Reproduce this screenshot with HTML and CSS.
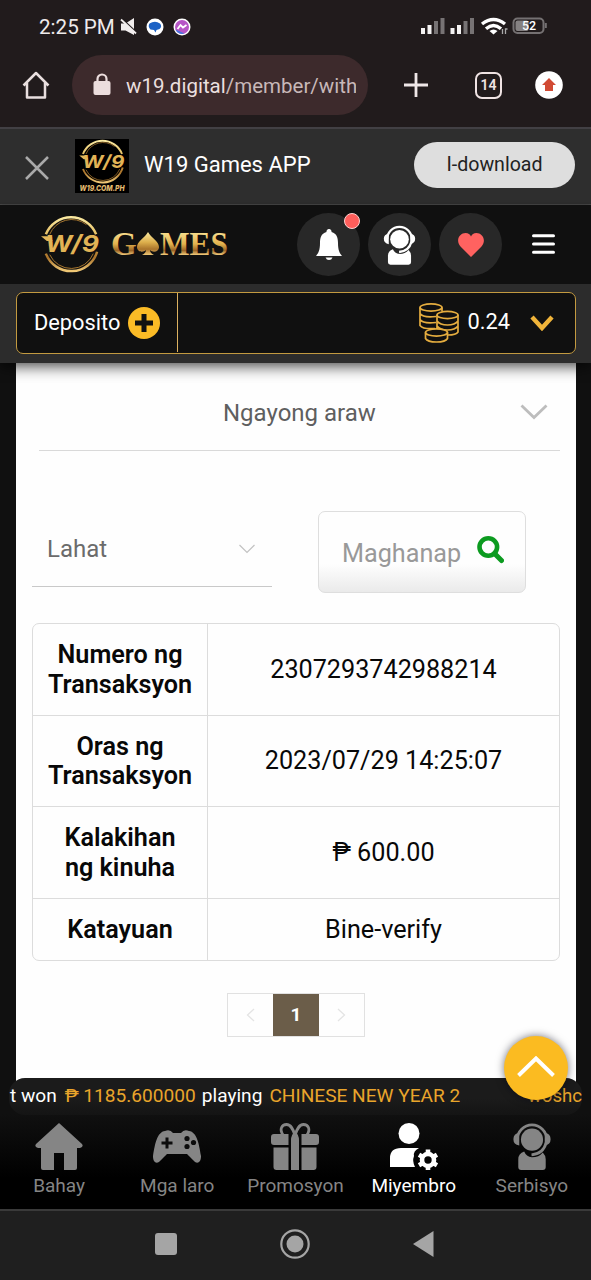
FILE: index.html
```html
<!DOCTYPE html>
<html lang="fil">
<head>
<meta charset="utf-8">
<title>W19 Games</title>
<link rel="stylesheet" href="styles.css">
</head>
<body>
<svg class="defs" width="0" height="0" aria-hidden="true">
  <defs>
    <linearGradient id="gold" x1="0" y1="0" x2="0" y2="1">
      <stop offset="0" stop-color="#fbe9a0"/><stop offset=".45" stop-color="#dcae4b"/><stop offset=".75" stop-color="#a9732b"/><stop offset="1" stop-color="#f0c876"/>
    </linearGradient>
    <linearGradient id="goldtext" x1="0" y1="0" x2="0" y2="1">
      <stop offset=".2" stop-color="#f6dc8a"/><stop offset=".5" stop-color="#e2b24d"/><stop offset=".68" stop-color="#9b6526"/><stop offset=".8" stop-color="#efc878"/>
    </linearGradient>
    <symbol id="emblem" viewBox="0 0 62 60">
      <path d="M5 20A28 28 0 0 1 57 20M5 40A28 28 0 0 0 58 38" fill="none" stroke="url(#gold)" stroke-width="2.6"/>
      <path d="M9 20A24.500 24.500 0 0 1 47 10M9 41A24.500 24.500 0 0 0 54 40" fill="none" stroke="#a9772f" stroke-width="1"/>
      <path d="M0 22h9l3 5H6z" fill="#e2b85c"/>
      <text x="4" y="38.500" textLength="56" lengthAdjust="spacingAndGlyphs" class="emblem-text" fill="#e2b456">W/9</text>
    </symbol>
    <symbol id="agent" viewBox="0 0 40 48">
      <path d="M5 17a15 15 0 0 1 30 0" fill="none" stroke="currentColor" stroke-width="2.800"/>
      <path d="M7 10v13q-6-1-6-6.500T7 10zM33 10v13q6-1 6-6.500T33 10z" fill="currentColor"/>
      <circle cx="20" cy="17" r="11.300" fill="currentColor"/>
      <path d="M12 29q-6 2-6 8v8q0 3 3 3h22q3 0 3-3v-8q0-4-3-7-4 5-11 5-6-1-8-6z" fill="currentColor"/>
      <path d="M34.500 20q-3 11.500-15 12.500" fill="none" stroke="currentColor" stroke-width="2.800"/>
    </symbol>
  </defs>
</svg>

<header class="status">
  <span class="clock">2:25 PM</span>
  <svg class="mute" width="18" height="18" viewBox="0 0 18 18"><path d="M1 5.500h4.500L14 0v17l-8.500-4.500H1z" fill="#f2eeee"/><path d="M1 0l17 16" stroke="#211b1c" stroke-width="1.800"/><path d="M1 1.500l15 14" stroke="#f2eeee" stroke-width="1.800"/></svg>
  <svg class="chat" width="18" height="18" viewBox="0 0 18 18"><circle cx="9" cy="9" r="8.500" fill="#fff"/><path d="M3.500 5.500Q9 2 14 5.500q2.500 3-.5 5.500l-3 1-1 2.500-1.500-2.500-3.500-.5q-3-3-1-6z" fill="#1c62c5"/></svg>
  <svg class="messenger" width="18" height="18" viewBox="0 0 18 18"><circle cx="9" cy="9" r="8.500" fill="#fff"/><circle cx="9" cy="9" r="7" fill="#b655c6"/><path d="M2.500 11.500a7 7 0 0 0 9 4z" fill="#4375df"/><path d="M4.500 11l3-4 2.500 2.500L13.500 7" fill="none" stroke="#fff" stroke-width="1.800"/></svg>
  <svg class="signals" width="126" height="20" viewBox="0 0 126 20">
    <g fill="#f4f2f2"><rect y="11" width="4" height="6"/><rect x="6.500" y="8" width="4" height="9"/><rect x="29.500" y="11" width="4" height="6"/><rect x="36" y="8" width="4" height="9"/></g>
    <g fill="#777374"><rect x="13" y="4" width="4" height="13"/><rect x="19.500" y="1" width="4" height="16"/><rect x="42.500" y="4" width="4" height="13"/><rect x="49" y="1" width="4" height="16"/></g>
    <path d="M61 7q11.500-9 23 0M65 11.800q7.500-6.500 15 0" fill="none" stroke="#fff" stroke-width="3.400"/><path d="M68.500 14q4-3 8 0l-4 3.500z" fill="#fff"/>
    <path d="M81.500 12v5M84.500 17v-5h2" fill="none" stroke="#aaa" stroke-width="1.300"/>
    <rect x="92.500" y="1.500" width="30" height="14.500" rx="4" fill="none" stroke="#757172" stroke-width="2"/><rect x="94.500" y="3.500" width="13" height="10.500" rx="2" fill="#858182"/><path d="M124.800 6v5" stroke="#757172" stroke-width="2"/>
    <text x="101" y="13" class="battery">52</text>
  </svg>
</header>

<nav class="browser">
  <svg class="home" width="28" height="29" viewBox="0 0 28 29"><path d="M1.500 14.500L14 2l12.500 12.500M5 12v14.500h18V12" fill="none" stroke="#e9dfdf" stroke-width="2.500" stroke-linejoin="round"/></svg>
  <div class="address">
    <svg width="18" height="23" viewBox="0 0 18 23"><rect x=".5" y="8" width="17" height="14" rx="2" fill="#ecdddd"/><path d="M4.500 9V6a4.500 4.500 0 0 1 9 0v3" fill="none" stroke="#ecdddd" stroke-width="2.200"/></svg>
    <span class="url">w19.digital<span class="path">/member/with</span></span>
  </div>
  <svg class="plus" width="24" height="24" viewBox="0 0 24 24"><path d="M12 0v24M0 12h24" stroke="#efe7e7" stroke-width="2.800"/></svg>
  <span class="tabs">14</span>
  <svg class="update" width="28" height="28" viewBox="0 0 28 28"><circle cx="14" cy="14" r="13.800" fill="#fff"/><path d="M14 7l7 7h-3v6h-8v-6H7z" fill="#d14a33"/></svg>
</nav>

<section class="banner">
  <svg class="close" width="24" height="24" viewBox="0 0 24 24"><path d="M1 1l22 22M23 1L1 23" stroke="#aaa" stroke-width="2.500"/></svg>
  <svg class="applogo" width="54" height="54" viewBox="0 0 54 54"><rect width="54" height="54" fill="#000"/><use href="#emblem" x="4" y="0" width="47" height="45"/><text x="27" y="52" text-anchor="middle" textLength="45" lengthAdjust="spacingAndGlyphs" class="domain">W19.COM.PH</text></svg>
  <span class="appname">W19 Games APP</span>
  <button class="download">I-download</button>
</section>

<section class="site">
  <svg class="logo" width="190" height="62" viewBox="0 0 190 62">
    <use href="#emblem" x="0" y="1" width="60" height="58"/>
    <g class="games" fill="url(#goldtext)"><text x="70" y="41">G</text><text x="119" y="41" textLength="68" lengthAdjust="spacingAndGlyphs">MES</text></g>
    <path d="M107 18c3 6 11 9 11 15 0 5-6 6-9 3q0 3 4 5h-12q4-2 4-5c-3 3-9 2-9-3 0-6 8-9 11-15z" fill="url(#gold)"/>
  </svg>
  <div class="round bell"><svg width="26" height="31" viewBox="0 0 26 31"><path d="M13 0a2.500 2.500 0 0 1 2.500 3C21 4.500 22 9 22 14c0 7 1.500 10 4 13H0c2.500-3 4-6 4-13 0-5 1-9.500 6.500-11A2.500 2.500 0 0 1 13 0z" fill="#fff"/><path d="M9.500 28.500h7q-1 2.500-3.500 2.500t-3.500-2.500z" fill="#fff"/></svg><i class="dot"></i></div>
  <div class="round"><svg width="33" height="40"><use href="#agent" width="33" height="40"/></svg></div>
  <div class="round"><svg width="26" height="24" viewBox="0 0 26 24"><path d="M13 24L2.500 13.500C-3 7 2 0 7.500 0 10.500 0 12 1.500 13 3.500 14 1.500 15.500 0 18.500 0 24 0 29 7 23.500 13.500z" fill="#ff6260"/></svg></div>
  <svg class="menu" width="23" height="20" viewBox="0 0 23 20"><path d="M1.500 1.700h20M1.500 10h20M1.500 18.300h20" stroke="#fff" stroke-width="3" stroke-linecap="round"/></svg>
</section>

<section class="wallet">
  <div class="walletbox">
    <div class="deposit"><span>Deposito</span><svg width="32" height="32" viewBox="0 0 32 32"><circle cx="16" cy="16" r="16" fill="#fbbb26"/><path d="M16 7v18M7 16h18" stroke="#111" stroke-width="5"/></svg></div>
    <div class="balance">
      <svg width="40" height="40" viewBox="0 0 40 40" fill="none" stroke="#e5ad3f" stroke-width="1.700">
        <ellipse cx="12" cy="4.500" rx="11" ry="3.600"/><path d="M1 4.500v18q3 4 15 3M23 4.500v4M1 10.500q3 4.500 16 3M1 16.500q3 4.500 16 3"/>
        <ellipse cx="28.500" cy="12" rx="10.500" ry="3.600"/><path d="M18 12v14M39 12v17q-2 3-10 3M18 18q3 4 10.500 4T39 18M18 23q3 4 10.500 4T39 23"/>
        <ellipse cx="17.500" cy="29.500" rx="11" ry="3.600" fill="#101010"/><path d="M6.500 29.500v6q2 3.500 11 3.500t11-3.500v-6"/>
      </svg>
      <span class="amount">0.24</span>
      <svg class="caret" width="24" height="16" viewBox="0 0 24 16"><path d="M2 2l10 11L22 2" fill="none" stroke="#f0b43a" stroke-width="4.400"/></svg>
    </div>
  </div>
</section>

<main class="page">
  <div class="sheet">
    <div class="range"><span>Ngayong araw</span><svg width="28" height="16" viewBox="0 0 28 16"><path d="M1.500 1.500L14 13.500l12.500-12" fill="none" stroke="#bdbdbd" stroke-width="2.800"/></svg></div>
    <div class="filters">
      <div class="select"><span>Lahat</span><svg width="16" height="10" viewBox="0 0 16 10"><path d="M.5 1L8 8.500 15.500 1" fill="none" stroke="#c2c2c2" stroke-width="1.200"/></svg></div>
      <button class="search"><span>Maghanap</span><svg width="27" height="29" viewBox="0 0 27 29"><circle cx="11.300" cy="12" r="8.800" fill="none" stroke="#0c9b20" stroke-width="4.600"/><path d="M17.500 18.500l7 7" stroke="#0c9b20" stroke-width="5" stroke-linecap="round"/></svg></button>
    </div>
    <div class="record">
      <div class="row"><b>Numero ng<br>Transaksyon</b><span>2307293742988214</span></div>
      <div class="row"><b>Oras ng<br>Transaksyon</b><span>2023/07/29 14:25:07</span></div>
      <div class="row"><b>Kalakihan<br>ng kinuha</b><span>₱ 600.00</span></div>
      <div class="row short"><b>Katayuan</b><span>Bine-verify</span></div>
    </div>
    <div class="pager">
      <i><svg width="9" height="14" viewBox="0 0 9 14"><path d="M8 1L1.500 7 8 13" fill="none" stroke="#e4e4e4" stroke-width="1.300"/></svg></i><b>1</b><i><svg width="9" height="14" viewBox="0 0 9 14"><path d="M1 1l6.500 6L1 13" fill="none" stroke="#e4e4e4" stroke-width="1.300"/></svg></i>
    </div>
  </div>
</main>

<footer class="bottom">
  <div class="ticker"><span class="winner">t won</span><em class="prize">₱ 1185.600000</em><span class="verb">playing</span><em class="title">CHINESE NEW YEAR 2</em><em class="next">woshc</em></div>
  <div class="tabsbar">
    <a><svg width="48" height="47" viewBox="0 0 48 47"><path d="M24 0l23 21q2 3-2 4h-3v20q0 2-2 2H29V30H19v17H8q-2 0-2-2V25H3q-4-1-2-4z" fill="currentColor"/></svg><span>Bahay</span></a>
    <a><svg width="48" height="47" viewBox="0 0 48 47"><path d="M12 8q5-2 8 2h8q3-4 8-2c8 1 10 13 12 25 0 8-5 8-8 4l-6-6H14l-6 6c-3 4-8 4-8-4C2 21 4 9 12 8z" fill="currentColor"/><path d="M14 14.500v11M8.500 20h11" stroke="#0c0c0c" stroke-width="3"/><g fill="#0c0c0c"><circle cx="34" cy="15.500" r="2.600"/><circle cx="34" cy="23.500" r="2.600"/><circle cx="40.500" cy="19.500" r="2.600"/></g></svg><span>Mga laro</span></a>
    <a><svg width="48" height="47" viewBox="0 0 48 47"><path d="M12 12C8 6 11 1.500 15.500 1.500 20 1.500 22 6 24 12M36 12c4-6 1-10.500-3.500-10.500C28 1.500 26 6 24 12" fill="none" stroke="currentColor" stroke-width="2.800"/><path d="M3 11h14.500v11H3q-3 0-3-3v-5q0-3 3-3zM30.500 11H45q3 0 3 3v5q0 3-3 3H30.500zM2.500 24.500h15V47h-12q-3 0-3-3zM30.500 24.500h15V44q0 3-3 3h-12zM20 47V17q0-5 4-9 4 4 4 9v30h-3V21h-2v26z" fill="currentColor"/><path d="M24 20v27" stroke="currentColor" stroke-width="3"/></svg><span>Promosyon</span></a>
    <a class="active"><svg width="48" height="47" viewBox="0 0 48 47"><circle cx="19" cy="10.500" r="10.500" fill="currentColor"/><path d="M0 44V35Q0 25 11 25H29q-6 3-5 8-2 5 1 11z" fill="currentColor"/><circle cx="38" cy="37" r="6" fill="none" stroke="currentColor" stroke-width="4.600"/><path d="M38 26.500v4M38 43.500v4M29 31.700l3.400 2M43.600 40.300l3.400 2M29 42.300l3.400-2M43.600 33.700l3.400-2" stroke="currentColor" stroke-width="4.600"/></svg><span>Miyembro</span></a>
    <a><svg width="48" height="47"><use href="#agent" x="4" y="0" width="40" height="47"/></svg><span>Serbisyo</span></a>
  </div>
  <button class="totop"><svg width="38" height="21" viewBox="0 0 38 21"><path d="M1.500 19.500L19 2.500l17.500 17" fill="none" stroke="#fff" stroke-width="4"/></svg></button>
</footer>

<div class="system">
  <svg width="22" height="22" viewBox="0 0 22 22"><rect width="22" height="22" rx="3" fill="#a5a5a5"/></svg>
  <svg width="30" height="30" viewBox="0 0 30 30"><circle cx="15" cy="15" r="13.700" fill="none" stroke="#a5a5a5" stroke-width="2.200"/><circle cx="15" cy="15" r="8.500" fill="#a5a5a5"/></svg>
  <svg width="21" height="26" viewBox="0 0 21 26"><path d="M20.500 0v26L0 13z" fill="#a5a5a5"/></svg>
</div>
</body>
</html>
```

FILE: styles.css
```css
* { box-sizing: border-box; }
body { margin: 0; width: 591px; height: 1280px; overflow: hidden; background: #101010; font-family: Roboto, "Liberation Sans", sans-serif; display: flex; flex-direction: column; }
svg { display: block; flex: none; }
.defs { position: absolute; }
button { border: 0; font-family: inherit; padding: 0; }
span, em { white-space: nowrap; }

.status { height: 54px; flex: none; background: #211b1c; display: flex; align-items: center; padding-left: 39px; color: #efebeb; }
.clock { font-size: 20.6px; width: 81px; }
.chat { margin-left: 8px; }
.messenger { margin-left: 9px; }
.signals { margin-left: 230px; }
.battery { font: 500 12.5px Roboto, sans-serif; fill: #fff; }

.browser { height: 73px; flex: none; background: #211b1c; display: flex; align-items: center; padding: 0 0 11px 22px; }
.address { margin-left: 22px; margin-top: -1px; width: 296px; height: 60px; border-radius: 30px; background: #3d2a2c; display: flex; align-items: center; padding: 0 11px 0 21px; gap: 15px; }
.url { font-size: 20.5px; color: #eadfdf; overflow: hidden; width: 230px; line-height: 30px; margin-top: 3px; }
.path { color: #c8b8b9; }
.plus { margin-left: 36px; }
.tabs { margin-left: 47px; width: 27px; height: 27px; border: 2.5px solid #efe3e3; border-radius: 7px; color: #efe3e3; font-size: 14px; font-weight: 600; line-height: 23px; text-align: center; }
.update { margin-left: 33px; }

.banner { height: 78px; flex: none; background: #2e2e2e; border-top: 2px solid #424044; border-bottom: 1px solid #4a4a4a; display: flex; align-items: center; padding-left: 25px; }
.close { margin-top: 3px; }
.applogo { margin-left: 26px; margin-top: -1px; }
.emblem-text { font: italic 700 24px "Inter", sans-serif; }
.domain { font: italic 800 8px "Inter", sans-serif; fill: #e4bb70; }
.appname { margin-left: 15px; width: 270px; font-size: 22px; color: #fff; margin-top: -5px; }
.download { width: 161px; height: 46px; border-radius: 23px; background: #dedede; color: #222; font-size: 19.6px; margin-top: -3px; padding-bottom: 2px; }

.site { height: 79px; flex: none; background: #101010; display: flex; align-items: center; padding-left: 41px; box-shadow: 0 2px 5px #111; z-index: 1; }
.logo { margin-right: 66px; }
.games { font: bold 33px "Liberation Serif", serif; }
.round { position: relative; width: 63px; height: 63px; margin-right: 8px; border-radius: 50%; background: #282828; color: #fff; display: flex; align-items: center; justify-content: center; }
.dot { position: absolute; top: 0; right: 0; width: 16px; height: 16px; border-radius: 50%; background: #ff5e5b; border: 1px solid #ffd0cf; }
.menu { margin-left: 22px; margin-top: -1px; }

.wallet { height: 79px; flex: none; background: #2c2c2c; padding: 8px 15px 0 16px; z-index: 1; box-shadow: 0 3px 14px rgba(0,0,0,.75); clip-path: inset(0 0 -20px 0); }
.walletbox { height: 62px; border: 1px solid #c39a40; border-radius: 7px; background: #101010; display: flex; color: #fff; font-size: 21.8px; padding-bottom: 1px; }
.deposit { width: 161px; border-right: 1px solid #dcb160; display: flex; align-items: center; padding-left: 17px; gap: 8px; }
.balance { flex: 1; display: flex; align-items: center; justify-content: flex-end; padding-right: 21px; }
.amount { margin-left: 9px; margin-right: 20px; margin-top: -3px; }

.page { height: 727px; flex: none; padding: 0 15px 0 16px; }
.sheet { height: 100%; background: #fefefe; padding: 0 16px; }
.range { height: 88px; margin-left: 7px; padding-top: 12px; padding-right: 12px; border-bottom: 1px solid #d9d9d9; display: flex; align-items: center; color: #5f5f5f; font-size: 24px; }
.range span { flex: 1; padding-left: 184px; }
.range svg { margin-top: -2px; }
.filters { display: flex; height: 82px; margin-top: 60px; }
.select { width: 240px; height: 76px; border-bottom: 1px solid #c9c9c9; display: flex; align-items: center; justify-content: space-between; padding: 0 17px 0 15px; font-size: 24px; color: #6b6b6b; }
.search { margin-left: 46px; width: 208px; height: 82px; border: 1px solid #dedede; border-radius: 7px; background: linear-gradient(#fefefe 65%, #eaeaea); display: flex; align-items: center; padding: 2px 0 0 23px; gap: 16px; color: #999; font-size: 25.2px; }
.search svg { margin-top: -8px; }

.record { margin-top: 30px; border: 1px solid #dcdcdc; border-radius: 7px; color: #080808; font-size: 25.2px; line-height: 29.5px; }
.row { height: 91.6px; display: grid; grid-template-columns: 175px 1fr; border-bottom: 1px solid #dcdcdc; text-align: center; }
.row b { border-right: 1px solid #dcdcdc; font-weight: 600; display: grid; align-content: center; padding-top: 1px; }
.row span { align-self: center; }
.row.short { height: 61px; border: 0; }

.pager { width: 138px; height: 44px; margin: 32px auto 0; border: 1px solid #e1e1e1; display: flex; }
.pager i { flex: 1; display: flex; align-items: center; justify-content: center; }
.pager b { width: 46px; background: #6b5d49; color: #fff; font-size: 19px; line-height: 42px; text-align: center; }

.bottom { position: relative; height: 131px; flex: none; margin-top: -12px; z-index: 2; background: linear-gradient(transparent 12px, #101010 12px, #101010 36px, #000 100px); }
.ticker { height: 37px; margin: 0 9px; border-radius: 16px; overflow: hidden; background: linear-gradient(#1b1b1b 55%, #141414); display: flex; align-items: center; font-size: 19.1px; color: #fff; padding-bottom: 2px; }
.ticker em { font-style: normal; color: #e9a52b; }
.winner { margin-left: 1px; width: 55px; }
.prize { width: 138px; }
.verb { width: 68px; }
.title { width: 260px; }
.next { font-size: 18.6px; }
.tabsbar { display: grid; grid-template-columns: repeat(5, 1fr); }
.tabsbar a { display: flex; flex-direction: column; align-items: center; padding-top: 8px; gap: 4px; font-size: 19px; line-height: 23px; color: #858585; }
.tabsbar a.active { color: #fff; }
.totop { position: absolute; left: 504px; top: -42px; width: 64px; height: 64px; border-radius: 50%; background: #fbbb21; box-shadow: 0 0 9px rgba(0,0,20,.55); display: flex; align-items: center; justify-content: center; padding-bottom: 3px; }

.system { flex: 1; background: #1f1f1f; border-top: 2px solid #3a3a3a; display: flex; align-items: center; justify-content: center; gap: 103px; padding: 0 2px 3px 0; }
```
